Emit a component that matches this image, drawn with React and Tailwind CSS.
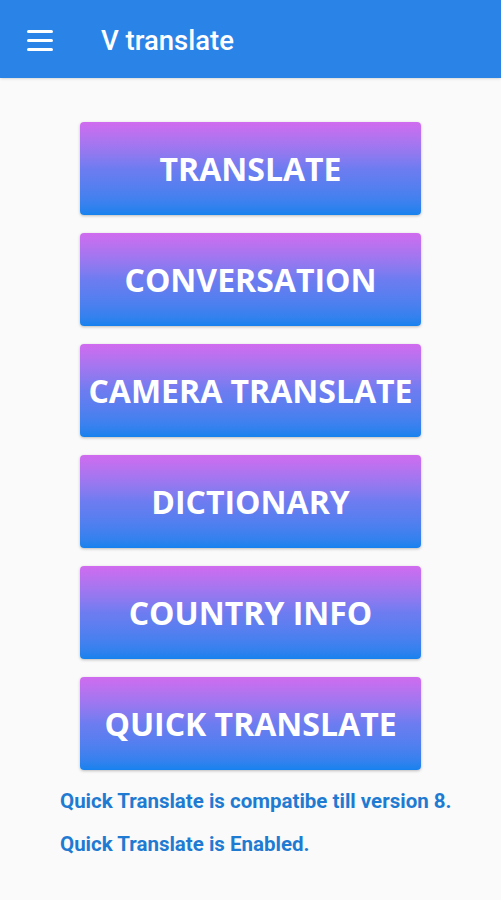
import React from 'react';

const items = [
    'TRANSLATE',
    'CONVERSATION',
    'CAMERA TRANSLATE',
    'DICTIONARY',
    'COUNTRY INFO',
    'QUICK TRANSLATE',
];

const App = () => {
    return (
        <div className="min-h-screen bg-[#fafafa] font-['Roboto',sans-serif]">
            <header className="h-[78px] bg-[#2a84e8] flex items-center shadow-sm">
                <div className="w-[101px] pl-[27px] pt-[2px] flex flex-col gap-[6px]">
                    <span className="block w-[26px] h-[3px] bg-white rounded-sm"></span>
                    <span className="block w-[26px] h-[3px] bg-white rounded-sm"></span>
                    <span className="block w-[26px] h-[3px] bg-white rounded-sm"></span>
                </div>
                <h1 className="text-white text-[27.5px] font-medium leading-none pt-[4px]">V translate</h1>
            </header>
            <main className="pt-[44px] flex flex-col items-center">
                <div className="w-[341px] flex flex-col gap-[18px]">
                    {items.map(label => (
                        <button
                            key={label}
                            className="h-[93px] w-full rounded-[4px] bg-gradient-to-b from-[#d06bef] via-[#6d7cf0] to-[#1482ee] shadow-[0_1px_3px_rgba(0,0,0,0.25)] text-white font-['Open_Sans',sans-serif] font-bold text-[32px] flex items-center justify-center"
                        >
                            {label}
                        </button>
                    ))}
                </div>
            </main>
            <div className="pl-[60px] pt-[10px] text-[#1f7ad2] font-bold text-[20.5px] leading-[43px]">
                <p>Quick Translate is compatibe till version 8.</p>
                <p>Quick Translate is Enabled.</p>
            </div>
        </div>
    );
};

export default App;
